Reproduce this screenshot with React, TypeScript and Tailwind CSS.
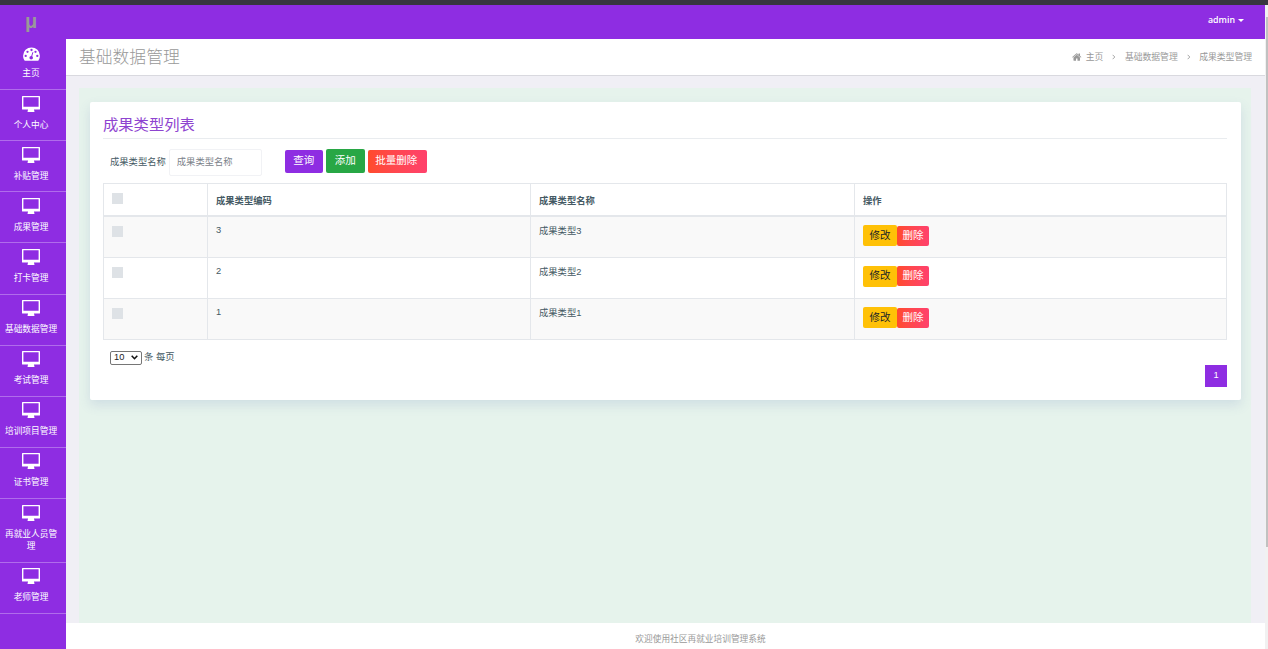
import React from "react";

interface MenuItem {
  label: string;
  height: string;
}

const menu: MenuItem[] = [
  { label: "个人中心", height: "h-[51px]" },
  { label: "补贴管理", height: "h-[51px]" },
  { label: "成果管理", height: "h-[51.4px]" },
  { label: "打卡管理", height: "h-[51.4px]" },
  { label: "基础数据管理", height: "h-[51.2px]" },
  { label: "考试管理", height: "h-[51px]" },
  { label: "培训项目管理", height: "h-[51px]" },
  { label: "证书管理", height: "h-[51.4px]" },
  { label: "再就业人员管理", height: "h-[63.6px]" },
  { label: "老师管理", height: "h-[51px]" },
];

const rows = [3, 2, 1];

const DesktopIcon = () => (
  <svg viewBox="0 0 18 16" className="h-4 w-[18px] shrink-0" fill="currentColor">
    <path
      fillRule="evenodd"
      d="M.6 0h16.8a.6.6 0 0 1 .6.6v12.3a.6.6 0 0 1-.6.6H12v1.1h.4V16H5.6v-1.4H6v-1.1H.6a.6.6 0 0 1-.6-.6V.6A.6.6 0 0 1 .6 0zm.8 1.3v9.4h15.2V1.3z"
    />
  </svg>
);

const GaugeIcon = () => (
  <svg viewBox="0 0 17 15" className="h-[15px] w-[17px] shrink-0">
    <path
      fill="#fff"
      d="M8.5.4A8.4 8.4 0 0 0 .1 8.8c0 1.7.5 3.2 1.3 4.5.2.4.5.5.8.5h12.6c.3 0 .6-.1.8-.5a8.4 8.4 0 0 0 1.3-4.5A8.4 8.4 0 0 0 8.5.4z"
    />
    <g fill="#8e2de2">
      <circle cx="2.7" cy="8.9" r="1.15" />
      <circle cx="4.5" cy="4.8" r="1.15" />
      <circle cx="8.5" cy="3" r="1.15" />
      <circle cx="12.5" cy="4.8" r="1.15" />
      <circle cx="14.3" cy="8.9" r="1.15" />
      <circle cx="8.2" cy="10.7" r="1.8" />
    </g>
    <path d="M8.3 10.5 9.8 5.6" stroke="#8e2de2" strokeWidth="1" strokeLinecap="round" />
  </svg>
);

const HomeIcon = () => (
  <svg viewBox="0 0 26 22" className="mr-[4px] mb-[2px] h-2 w-[9.5px]" fill="currentColor">
    <path d="M22 12.5V20a1 1 0 0 1-1 1h-6v-6h-4v6H5a1 1 0 0 1-1-1v-7.5L13 5zM25.5 11.4l-1 1.1c-.2.2-.5.2-.7 0L13 3.5l-10.8 9c-.2.2-.5.2-.7 0l-1-1.1c-.2-.2-.2-.5.1-.7L11.8 1.3c.7-.5 1.7-.5 2.4 0L18 4.5V2c0-.3.2-.5.5-.5h3c.3 0 .5.2.5.5v5.8l3.4 2.9c.3.2.3.5.1.7z" />
  </svg>
);

const Chevron = () => (
  <svg viewBox="0 0 4 6" className="mx-[9px] mb-px h-[6px] w-[3.5px]" fill="none" stroke="currentColor" strokeWidth="1">
    <path d="M.7.5 3.2 3 .7 5.5" />
  </svg>
);

const Sidebar = () => (
  <aside className="w-[66px] shrink-0 bg-[#8e2de2] text-center text-[8.7px] leading-[12px] text-white">
    <div className="h-[33px] pt-[5px] pr-1 text-[20px] leading-[22px] font-bold text-[#999]">μ</div>
    <div className="flex h-[52px] flex-col items-center border-b border-white/30 pt-[9px] pr-1">
      <GaugeIcon />
      <span className="mt-[5px]">主页</span>
    </div>
    {menu.map((item) => (
      <div
        key={item.label}
        className={`flex flex-col items-center border-b border-white/30 pt-[5.5px] pr-[6px] pl-[2px] ${item.height}`}
      >
        <DesktopIcon />
        <span className="mt-[7px] px-[2px]">{item.label}</span>
      </div>
    ))}
  </aside>
);

const Checkbox = () => <span className="block h-[11px] w-[11px] bg-[#dee2e6]" />;

const App = () => {
  return (
    <div className="flex h-[649px] w-[1268px] flex-col overflow-hidden bg-[#38363f] pt-[5px] font-['Liberation_Sans','Noto_Sans_CJK_SC',sans-serif] text-[9.3px] text-[#455a64]">
      <div className="flex min-h-0 flex-1">
        <Sidebar />
        <div className="flex min-w-0 flex-1 flex-col bg-[#f0eff5]">
          <header className="flex h-[34px] shrink-0 items-center justify-end bg-[#8e2de2] pr-[21px] pb-[3px] font-['Open_Sans'] text-[8.8px] font-semibold text-white">
            admin
            <svg viewBox="0 0 6 3" className="mb-px ml-[3px] h-[3px] w-[6px]" fill="currentColor">
              <path d="M0 0h6L3 3z" />
            </svg>
          </header>
          <div className="flex h-[37px] shrink-0 items-center justify-between border-b border-[#d9d9df] bg-white pr-[13px] pl-[13px] text-[#999]">
            <h1 className="pt-[2px] text-[16.8px] font-light">基础数据管理</h1>
            <nav className="flex items-center pt-px text-[8.8px]">
              <HomeIcon />
              <span>主页</span>
              <Chevron />
              <span>基础数据管理</span>
              <Chevron />
              <span>成果类型管理</span>
            </nav>
          </div>
          <main className="mt-3 mr-[14px] ml-[13px] min-h-0 flex-1 bg-[#e6f3ec] pt-[14px] pr-[10px] pl-[11px]">
            <section className="h-[298px] rounded-[2px] bg-white pt-[11px] pr-[14px] pl-[13px] shadow-[0_5px_12px_rgba(90,110,180,0.16)]">
              <h2 className="h-[26px] border-b border-[#e9ecef] text-[15.3px] leading-[24px] text-[#8e44d0]">
                成果类型列表
              </h2>
              <div className="flex h-[44px] items-center pl-[7px]">
                <label className="pt-[3px]">成果类型名称</label>
                <input
                  placeholder="成果类型名称"
                  className="mt-[2px] ml-[3px] h-[27px] w-[93px] rounded-[2px] border border-[#f1f2f5] px-[7px] placeholder:text-[#7b828a]"
                />
                <div className="ml-[23px] flex items-center gap-[3px] text-[10.5px] text-white">
                  <button className="h-[23px] w-[38px] rounded-[2px] bg-[#8e2de2]">查询</button>
                  <button className="h-6 w-[39px] rounded-[2px] bg-[#28a745]">添加</button>
                  <button className="h-[23px] w-[59px] rounded-[2px] bg-linear-to-r from-[#ff4b2b] to-[#ff416c] pr-[2px]">
                    批量删除
                  </button>
                </div>
              </div>
              <table className="w-full table-fixed border-collapse text-left">
                <colgroup>
                  <col className="w-[104px]" />
                  <col className="w-[323px]" />
                  <col className="w-[324px]" />
                  <col />
                </colgroup>
                <thead>
                  <tr className="h-[32.5px]">
                    <th className="border border-b-2 border-[#e4e7eb] px-2 pb-[3px]">
                      <Checkbox />
                    </th>
                    <th className="border border-b-2 border-[#e4e7eb] px-2 pt-[5px]">成果类型编码</th>
                    <th className="border border-b-2 border-[#e4e7eb] px-2 pt-[5px]">成果类型名称</th>
                    <th className="border border-b-2 border-[#e4e7eb] px-2 pt-[5px]">操作</th>
                  </tr>
                </thead>
                <tbody>
                  {rows.map((n) => (
                    <tr key={n} className="h-[41.3px] align-top odd:bg-[#f9f9f9]">
                      <td className="border border-[#e4e7eb] px-2 pt-[9px]">
                        <Checkbox />
                      </td>
                      <td className="border border-[#e4e7eb] px-2 pt-[7px]">{n}</td>
                      <td className="border border-[#e4e7eb] px-2 pt-2">成果类型{n}</td>
                      <td className="border border-[#e4e7eb] px-2 pt-2">
                        <div className="flex items-center text-[10.5px]">
                          <button className="h-[21px] w-[34px] rounded-[2px] bg-[#ffc107] text-[#212529]">
                            修改
                          </button>
                          <button className="h-[20px] w-8 rounded-[2px] bg-linear-to-r from-[#ff4b2b] to-[#ff416c] text-white">
                            删除
                          </button>
                        </div>
                      </td>
                    </tr>
                  ))}
                </tbody>
              </table>
              <div className="mt-[10px] flex h-[15px] items-center pl-[7px]">
                <div className="mr-[2px] flex h-[14px] w-8 items-center justify-between rounded-[2px] border border-[#767676] px-[3px] text-[#222]">
                  <span className="pt-px">10</span>
                  <svg viewBox="0 0 7 5" className="h-[5px] w-[7px]" fill="none" stroke="#111" strokeWidth="1.6">
                    <path d="M.7.8 3.5 3.7 6.3.8" />
                  </svg>
                </div>
                <span className="pt-px">条 每页</span>
              </div>
              <div className="flex justify-end">
                <button className="h-[22px] w-[22px] bg-[#8e2de2] text-white">1</button>
              </div>
            </section>
          </main>
          <footer className="flex h-[26px] shrink-0 items-center justify-center bg-white pt-[7px] pl-[70px] text-[8.7px] text-[#999]">
            欢迎使用社区再就业培训管理系统
          </footer>
        </div>
        <div className="w-[3px] shrink-0 bg-[#f1f1f1] pt-3 pl-px">
          <div className="h-[530px] bg-[#c1c1c1]" />
        </div>
      </div>
    </div>
  );
};

export default App;
